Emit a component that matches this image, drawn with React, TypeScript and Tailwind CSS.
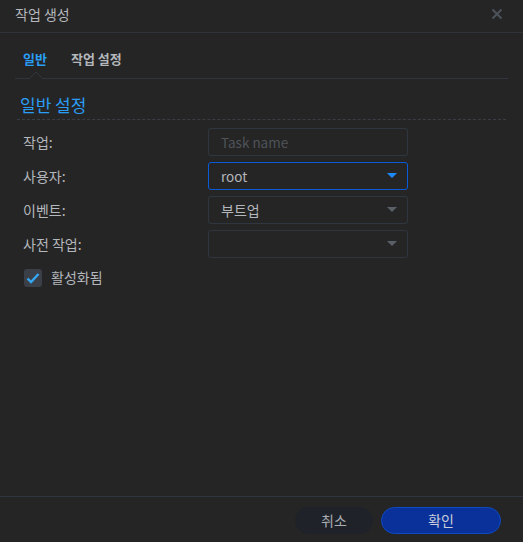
import React from 'react';

const font = { fontFamily: '"Noto Sans CJK KR", "Noto Sans", sans-serif' };

const Caret: React.FC<{ active?: boolean }> = ({ active }) => (
  <svg width="10" height="6" viewBox="0 0 10 6" className="shrink-0">
    <path d="M0 0h10L5 5z" fill={active ? '#1a8cff' : '#5a6068'} />
  </svg>
);

interface RowProps {
  label: string;
  children: React.ReactNode;
}

const Row: React.FC<RowProps> = ({ label, children }) => (
  <div className="flex items-center h-[28px]">
    <div className="w-[185px] text-[14px] text-[#b4b7bc]">{label}</div>
    {children}
  </div>
);

const App: React.FC = () => {
  return (
    <div className="w-[523px] h-[542px] bg-[#252525] flex flex-col text-[#b4b7bc]" style={font}>
      <div className="h-[33px] shrink-0 border-b border-[#30343a] flex items-start justify-between pl-[15px] pr-[20px]">
        <span className="text-[14px] leading-[28px] text-[#b4b7bc]">작업 생성</span>
        <svg width="12" height="12" viewBox="0 0 12 12" className="mt-[8px]">
          <path d="M1.5 1.5l9 9M10.5 1.5l-9 9" stroke="#4c525a" strokeWidth="2" />
        </svg>
      </div>

      <div className="relative mx-[15px] h-[46px] border-b border-[#30363f] flex items-start gap-[24px] pl-[8px] pt-[17px]">
        <span className="text-[13px] leading-[18px] font-bold text-[#2a9df4]">일반</span>
        <span className="text-[13px] leading-[18px] font-bold text-[#b4b7bc]">작업 설정</span>
        <svg width="14" height="7" viewBox="0 0 14 7" className="absolute left-[14px] bottom-[-1px]">
          <path d="M0 7L7 0L14 7" fill="#252525" stroke="#30363f" strokeWidth="1" />
        </svg>
      </div>

      <div className="mx-[17px] mt-[14px] pl-[3px] pb-[2px] border-b border-dashed border-[#3a3e44]">
        <span className="text-[17px] leading-[20px] text-[#2a9df4]">일반 설정</span>
      </div>

      <div className="flex flex-col gap-[6px] pl-[23px] mt-[8px]">
        <Row label="작업:">
          <div className="w-[200px] h-[28px] rounded-[3px] border border-[#30363f] flex items-center px-[12px] text-[13.5px] text-[#4f5359]">
            Task name
          </div>
        </Row>
        <Row label="사용자:">
          <div className="w-[200px] h-[28px] rounded-[3px] border border-[#0a5ad8] flex items-center justify-between pl-[12px] pr-[10px] text-[13.5px] text-[#b4b7bc]">
            <span>root</span>
            <Caret active />
          </div>
        </Row>
        <Row label="이벤트:">
          <div className="w-[200px] h-[28px] rounded-[3px] border border-[#30363f] flex items-center justify-between pl-[12px] pr-[10px] text-[14px] text-[#b4b7bc]">
            <span>부트업</span>
            <Caret />
          </div>
        </Row>
        <Row label="사전 작업:">
          <div className="w-[200px] h-[28px] rounded-[3px] border border-[#30363f] flex items-center justify-end pl-[12px] pr-[10px]">
            <Caret />
          </div>
        </Row>
        <div className="flex items-center gap-[9px] mt-[3px] pl-[1px]">
          <div className="w-[18px] h-[18px] rounded-[3px] bg-[#3b4048] flex items-center justify-center">
            <svg width="14" height="12" viewBox="0 0 14 12">
              <path d="M1.5 6.5l3.5 3.5L12.5 2" stroke="#35a8f5" strokeWidth="2.4" fill="none" />
            </svg>
          </div>
          <span className="text-[14px] text-[#b4b7bc]">활성화됨</span>
        </div>
      </div>

      <div className="flex-1" />

      <div className="h-[46px] shrink-0 border-t border-[#30363f] flex items-start justify-end gap-[8px] pr-[22px] pt-[10px]">
        <button className="w-[78px] h-[27px] rounded-full bg-[#1f2329] text-[14px] text-[#a9adb3]">취소</button>
        <button className="w-[120px] h-[27px] rounded-full bg-[#0a319a] border border-[#0c4bc4] text-[14px] text-[#c9ceda]">확인</button>
      </div>
    </div>
  );
};

export default App;
